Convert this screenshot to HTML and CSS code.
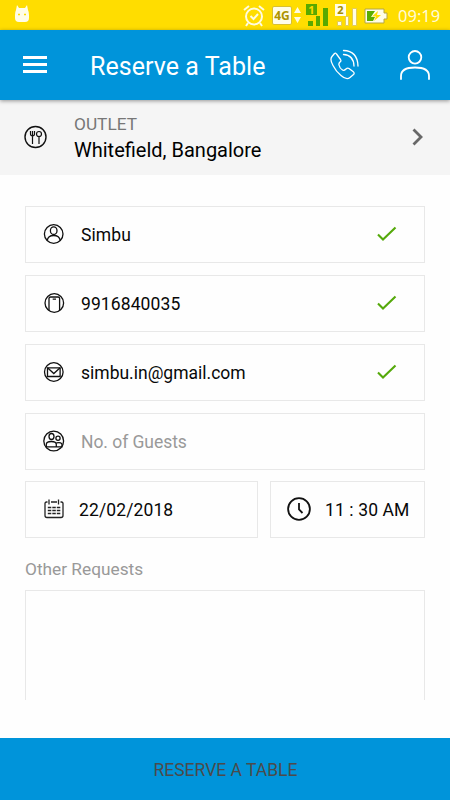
FILE: index.html
```html
<!DOCTYPE html>
<html lang="en">
<head>
<meta charset="utf-8">
<title>Reserve a Table</title>
<link rel="stylesheet" href="styles.css">
</head>
<body>
<div class="status">
  <svg class="cat" width="16" height="18" viewBox="0 0 16 18"><path d="M3 0l2 3h6l2-3 1 5q1 2 1 5v3q0 4-4 4H5q-4 0-4-4v-3q0-3 1-5z" fill="#fffde8"/><path d="M4 9.500h2M10 9.500h2" stroke="#fd0" stroke-width="1.300"/></svg>
  <svg class="alarm" width="22" height="22" viewBox="0 0 22 22" fill="none" stroke="#fffbe0" stroke-width="2"><circle cx="11" cy="11.500" r="8"/><path d="M1 5l5-4M16 1l5 4M5 18l-2 3M17 18l2 3M7.500 11l3 3 4.500-5"/></svg>
  <span class="net">4G</span>
  <svg class="arrows" width="7" height="18" viewBox="0 0 7 18" fill="#fffbe0"><path d="M3.500 1L7 7H0zM3.500 17L0 11h7z"/></svg>
  <span class="sim sim-one"><b>1</b><i></i><i></i><i></i></span>
  <span class="sim sim-two"><b>2</b><i></i><i></i><i></i></span>
  <svg class="battery" width="24" height="16" viewBox="0 0 24 16"><path d="M1 1h19v4h3v6h-3v4H1z" fill="#fffde8" stroke="#b5a642"/><path d="M3 3h8l-4 6h4l-2 4H3z" fill="#5aad00"/><path d="M14 3L8 8.500h4L10 13l7-6h-4z" fill="#fd0"/></svg>
  <span class="clock">09:19</span>
</div>
<header class="bar">
  <svg class="menu" width="24" height="18" viewBox="0 0 24 18" fill="#fff"><path d="M0 0h24v3H0zM0 7h24v3H0zM0 14h24v3H0z"/></svg>
  <h1>Reserve a Table</h1>
  <svg class="phone" width="32" height="32" viewBox="0 0 32 32" fill="none" stroke="#fff" stroke-width="1.300" stroke-linejoin="round" stroke-linecap="round"><path d="M5.500 4.500L3 7.500q-2.500 3 1 9 3 6 8 10 5.500 5 9 2l3.500-3q1.500-1.500-.5-3l-4-3q-1.500-1-3 .5-2 2-3.500 1-3-2-3.500-5-.5-1.500 1-3 1.500-1 .5-2.500L7.500 5Q6.500 3.500 5.500 4.500z"/><path d="M14.500 1.500Q28.500 2 29 17M14.500 5.500Q24.500 6 25 17"/></svg>
  <svg class="user" width="30" height="30" viewBox="0 0 30 30" fill="none" stroke="#fff" stroke-width="1.800" stroke-linecap="round"><circle cx="15" cy="7.300" r="6.300"/><path d="M1 29v-3Q1 17.500 15 17.500T29 26v3"/></svg>
</header>
<section class="outlet">
  <svg class="cutlery" width="24" height="24" viewBox="0 0 24 24" fill="none" stroke="#111" stroke-width="1.400"><circle cx="11.500" cy="12" r="10.500"/><circle cx="15" cy="9" r="2.500" stroke-width="1.200"/><path d="M15 11.500V19M8.500 6v13M6.500 6v3q0 1.800 2 1.800t2-1.800V6" stroke-width="1.200"/></svg>
  <div class="place"><span class="label">OUTLET</span><span class="name">Whitefield, Bangalore</span></div>
  <svg class="chevron" width="14" height="20" viewBox="0 0 14 20" fill="none" stroke="#686868" stroke-width="2.800"><path d="M1.500 2.500L9 10l-7.500 7.500"/></svg>
</section>
<main class="form">
  <div class="field">
    <svg class="icon" width="22" height="22" viewBox="0 0 22 22" fill="none" stroke="#111" stroke-width="1.300"><circle cx="10.700" cy="11" r="9.300"/><ellipse cx="10.700" cy="7.700" rx="3.300" ry="3.800"/><path d="M4.200 17.500C5.200 10.800 16.200 10.800 17.200 17.500"/></svg>
    <span class="value name-value">Simbu</span>
    <svg class="tick" width="22" height="16" viewBox="0 0 22 16"><path d="M2 8.500l5 5L19.500 1.500"/></svg>
  </div>
  <div class="field">
    <svg class="icon" width="22" height="22" viewBox="0 0 22 22" fill="none" stroke="#111" stroke-width="1.300"><circle cx="11.300" cy="11" r="9.300"/><path d="M6 18.500V6.500q0-1.500 1.500-1.500h7.600q1.500 0 1.500 1.500v12M9.700 7.200h3.300"/></svg>
    <span class="value number">9916840035</span>
    <svg class="tick" width="22" height="16" viewBox="0 0 22 16"><path d="M2 8.500l5 5L19.500 1.500"/></svg>
  </div>
  <div class="field">
    <svg class="icon" width="22" height="22" viewBox="0 0 22 22" fill="none" stroke="#111" stroke-width="1.300"><circle cx="10.800" cy="11" r="9.300"/><path d="M4.500 6.800h12.600v8.700H4.500z"/><path d="M4.500 6.800l6.300 5.700 6.300-5.700"/></svg>
    <span class="value">simbu.in@gmail.com</span>
    <svg class="tick" width="22" height="16" viewBox="0 0 22 16"><path d="M2 8.500l5 5L19.500 1.500"/></svg>
  </div>
  <div class="field">
    <svg class="icon" width="22" height="22" viewBox="0 0 22 22" fill="none" stroke="#111" stroke-width="1.300"><circle cx="10.700" cy="11" r="9.900"/><ellipse cx="8.500" cy="6.500" rx="2.500" ry="3"/><circle cx="15" cy="8.300" r="2.100"/><path d="M3.300 16.800v-2.300q0-3 5-3t5 3v2.300zM13.500 12.800q5.500-1 5.500 2v2h-5.500"/></svg>
    <span class="value hint">No. of Guests</span>
  </div>
  <div class="row">
    <div class="field date">
      <svg class="icon" width="22" height="22" viewBox="0 0 22 22" fill="none" stroke="#222" stroke-width="1.300"><path d="M4.500 4H3.500Q2 4 2 5.500v12Q2 19.500 4 19.500h14q2 0 2-2v-12Q20 4 18.500 4h-1M8 4h6M6 1.500v5M15.500 1.500v5"/><path d="M4.800 9.500h13M4.800 12.500h13M4.800 15.500h13" stroke-dasharray="3.500 1" stroke-width="1.400"/></svg>
      <span class="value">22/02/2018</span>
    </div>
    <div class="field time">
      <svg class="icon" width="24" height="24" viewBox="0 0 24 24" fill="none" stroke="#111" stroke-width="1.800"><circle cx="12" cy="12" r="10.900"/><path d="M12 6v6.500l3.500 3.500"/></svg>
      <span class="value">11 : 30 AM</span>
    </div>
  </div>
  <label class="caption" for="requests">Other Requests</label>
  <div class="requests" id="requests"></div>
</main>
<footer class="submit">RESERVE A TABLE</footer>
</body>
</html>
```
FILE: styles.css
```css
* { box-sizing: border-box; }
body {
  margin: 0;
  width: 450px;
  height: 800px;
  display: flex;
  flex-direction: column;
  overflow: hidden;
  background: #fefefe;
  color: #080808;
  font-family: Roboto, sans-serif;
}
svg { flex: none; display: block; }
.status {
  height: 30px;
  flex: none;
  display: flex;
  align-items: center;
  background: #fd0;
  padding-left: 14px;
}
.alarm { margin-left: 213px; margin-top: 2px; }
.cat { margin-top: -2px; }
.net {
  width: 20px;
  height: 19px;
  margin: 1px 0 0 7px;
  background: #fffde8;
  border: 1px solid #d8bf30;
  border-radius: 2px;
  color: #ad9400;
  font: bold 12px/17px "Noto Sans", sans-serif;
  text-align: center;
}
.arrows { margin-left: 2px; }
.sim {
  position: relative;
  width: 22px;
  height: 22px;
  margin-left: 5px;
  display: flex;
  align-items: flex-end;
  justify-content: flex-end;
  gap: 2px;
}
.sim b {
  position: absolute;
  left: 0;
  top: 0;
  width: 11px;
  height: 12px;
  font: bold 11px/12px "Noto Sans", sans-serif;
  text-align: center;
}
.sim i { width: 5px; background: #58a900; }
.sim i:nth-of-type(1) { height: 5px; }
.sim i:nth-of-type(2) { height: 13px; }
.sim i:nth-of-type(3) { height: 18px; }
.sim i:nth-of-type(2) { width: 4px; }
.sim i + i { margin-left: 1px; }
.sim-one b { background: #58a900; color: #fd0; }
.sim-two { margin-left: 7px; }
.sim-two b { background: #fffde8; color: #a58e00; }
.sim-two i { background: #fffde8; border: 1px solid #e3cc58; }
.battery { margin-left: 7px; margin-top: 2px; }
.clock {
  margin: 2px 0 0 10px;
  color: #fffbd8;
  font: 16.500px/22px "Noto Sans", sans-serif;
}
.bar {
  position: relative;
  z-index: 1;
  height: 70px;
  flex: none;
  display: flex;
  align-items: center;
  padding: 0 20px 0 23px;
  background: #0094da;
  color: #fff;
  box-shadow: 0 1px 4px rgba(0, 0, 0, .4);
}
.menu { margin-top: -1px; }
.bar h1 { margin: 3px 0 0 43px; font-size: 25px; letter-spacing: .05px; line-height: 30px; font-weight: 400; white-space: nowrap; }
.phone { margin-left: auto; }
.user { margin-left: 39px; }
.outlet {
  height: 75px;
  flex: none;
  display: flex;
  align-items: center;
  padding: 0 24px;
  background: #f5f5f5;
}
.cutlery { margin-top: -2px; }
.place { display: flex; flex-direction: column; margin: 1px 0 0 26px; }
.label { font-size: 17.300px; line-height: 24px; color: #777; }
.name { margin-top: 1px; font-size: 20px; line-height: 27px; color: #000; }
.chevron { margin: -1px 0 0 auto; }
.form {
  height: 525px;
  flex: none;
  padding: 31px 25px 0;
  display: flex;
  flex-direction: column;
  overflow: hidden;
}
.field {
  height: 57px;
  flex: none;
  display: flex;
  align-items: center;
  margin-bottom: 12px;
  padding: 0 26px 1px 17px;
  border: 1px solid #e8e8e8;
}
.icon { margin-top: -1px; }
.value { margin: 1px 0 0 16px; font-size: 17.500px; line-height: 24px; white-space: nowrap; }
.name-value, .number { letter-spacing: .1px; }
.hint { color: #999; letter-spacing: -.05px; }
.tick { margin: -1px 0 0 auto; fill: none; stroke: #55a90b; stroke-width: 2.100; }
.row { display: flex; gap: 12px; margin-top: -1px; }
.date { width: 233px; }
.time { width: 155px; padding: 0 0 1px 16px; }
.date .value, .time .value { margin-left: 14px; letter-spacing: .12px; }
.caption { margin-top: 7px; color: #999; font-size: 17.300px; line-height: 24px; }
.requests { flex: 1; margin-top: 9px; border: 1px solid #e8e8e8; border-bottom: 0; }
.submit {
  height: 62px;
  flex: none;
  margin-top: auto;
  padding: 1px 0 0 1px;
  display: flex;
  align-items: center;
  justify-content: center;
  background: #0094da;
  color: #4b4b4b;
  font-size: 17.500px;
}
.sim-one b { height: 11px; line-height: 11px; }
.sim-one i:nth-of-type(2), .sim-two i:nth-of-type(2) { height: 10px; }
```
